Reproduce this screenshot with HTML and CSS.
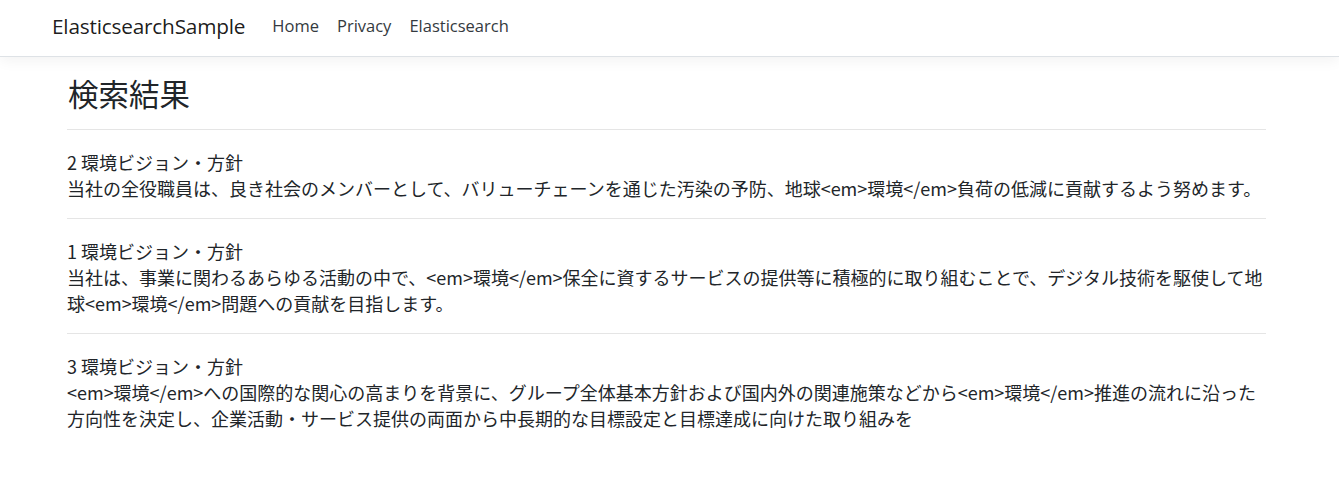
FILE: index.html
```html
<!DOCTYPE html>
<html lang="ja">
<head>
<meta charset="utf-8">
<title>検索結果 - ElasticsearchSample</title>
<link rel="stylesheet" href="styles.css">
</head>
<body>
<header class="navbar">
  <div class="nav-inner">
    <a class="brand" href="#">ElasticsearchSample</a>
    <nav class="nav-links">
      <a class="nav-link" href="#">Home</a>
      <a class="nav-link" href="#">Privacy</a>
      <a class="nav-link" href="#">Elasticsearch</a>
    </nav>
  </div>
</header>
<main class="container">
  <h3 class="page-title">検索結果</h3>
  <hr class="divider">
  <div class="result">
    <div class="result-title">2 環境ビジョン・方針</div>
    <div class="result-body">当社の全役職員は、良き社会のメンバーとして、バリューチェーンを通じた汚染の予防、地球&lt;em&gt;環境&lt;/em&gt;負荷の低減に貢献するよう努めます。</div>
  </div>
  <hr class="divider">
  <div class="result">
    <div class="result-title">1 環境ビジョン・方針</div>
    <div class="result-body">当社は、事業に関わるあらゆる活動の中で、&lt;em&gt;環境&lt;/em&gt;保全に資するサービスの提供等に積極的に取り組むことで、デジタル技術を駆使して地球&lt;em&gt;環境&lt;/em&gt;問題への貢献を目指します。</div>
  </div>
  <hr class="divider">
  <div class="result">
    <div class="result-title">3 環境ビジョン・方針</div>
    <div class="result-body">&lt;em&gt;環境&lt;/em&gt;への国際的な関心の高まりを背景に、グループ全体基本方針および国内外の関連施策などから&lt;em&gt;環境&lt;/em&gt;推進の流れに沿った方向性を決定し、企業活動・サービス提供の両面から中長期的な目標設定と目標達成に向けた取り組みを</div>
  </div>
</main>
</body>
</html>
```
FILE: styles.css
```css
* { box-sizing: border-box; }
html, body { margin: 0; padding: 0; }
body {
  font-family: "Noto Sans CJK JP", "Noto Sans", sans-serif;
  font-size: 18px;
  line-height: 26px;
  color: #212529;
  background: #fff;
}
.navbar {
  height: 57px;
  background: #fff;
  border-bottom: 1px solid #dee2e6;
  box-shadow: 0 4px 13px rgba(0, 0, 0, 0.05);
  margin-bottom: 17px;
}
.nav-inner {
  display: flex;
  align-items: center;
  height: 52px;
  padding-left: 52px;
}
.brand {
  font-family: "Open Sans", "Noto Sans", sans-serif;
  font-size: 20.8px;
  color: rgba(0, 0, 0, 0.9);
  text-decoration: none;
  margin-right: 18px;
  letter-spacing: -0.2px;
}
.nav-links { display: flex; }
.nav-link {
  font-family: "Open Sans", "Noto Sans", sans-serif;
  font-size: 16.5px;
  color: #343a40;
  text-decoration: none;
  padding: 0 9px;
}
.container {
  margin: 0 73px 0 67px;
}
.page-title {
  font-family: "Noto Sans CJK JP", sans-serif;
  font-size: 30.5px;
  font-weight: 400;
  line-height: 37px;
  margin: 0 0 0 1px;
  padding-top: 1px;
}
.divider {
  border: 0;
  border-top: 1px solid rgba(0, 0, 0, 0.1);
  margin: 17px 0 19px;
}
.result-title, .result-body { margin: 0; }
```
